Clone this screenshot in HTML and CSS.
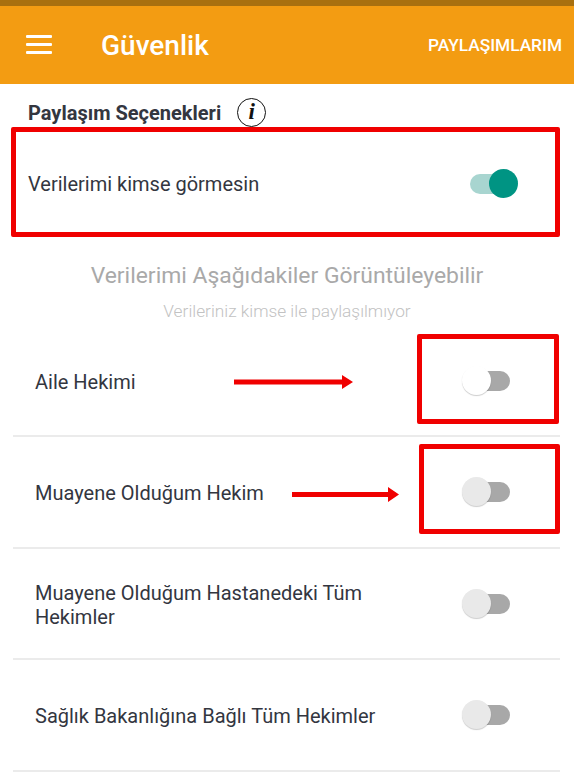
FILE: index.html
```html
<!DOCTYPE html>
<html lang="en">
<head>
    <meta charset="UTF-8">
    <meta name="viewport" content="width=device-width, initial-scale=1.0">
    <title>Güvenlik</title>
    <link rel="stylesheet" href="styles.css">
</head>
<body>
    <div class="status-strip"></div>

    <header class="app-bar">
        <div class="menu-icon"><span></span><span></span><span></span></div>
        <h1 class="app-title">Güvenlik</h1>
        <div class="app-action">PAYLAŞIMLARIM</div>
    </header>

    <div class="section-head">
        <h2>Paylaşım Seçenekleri</h2>
        <span class="info-icon">i</span>
    </div>

    <div class="hide-box">
        <span class="row-label">Verilerimi kimse görmesin</span>
        <div class="toggle on"><div class="track"></div><div class="knob"></div></div>
    </div>

    <div class="viewers-title">Verilerimi Aşağıdakiler Görüntüleyebilir</div>
    <div class="viewers-sub">Verileriniz kimse ile paylaşılmıyor</div>

    <div class="row">
        <span class="row-label">Aile Hekimi</span>
        <div class="toggle white"><div class="track"></div><div class="knob"></div></div>
        <svg class="arrow arrow-one" width="119" height="14" viewBox="0 0 119 14"><path d="M0 4.5h108V0l11 7-11 7V9.5H0z" fill="#f00000"/></svg>
        <div class="mark mark-one"></div>
    </div>
    <div class="row">
        <span class="row-label">Muayene Olduğum Hekim</span>
        <div class="toggle"><div class="track"></div><div class="knob"></div></div>
        <svg class="arrow arrow-two" width="107" height="15" viewBox="0 0 107 15"><path d="M0 5h96V0l11 7.5-11 7.5v-5H0z" fill="#f00000"/></svg>
        <div class="mark mark-two"></div>
    </div>
    <div class="row">
        <span class="row-label">Muayene Olduğum Hastanedeki Tüm Hekimler</span>
        <div class="toggle"><div class="track"></div><div class="knob"></div></div>
    </div>
    <div class="row">
        <span class="row-label">Sağlık Bakanlığına Bağlı Tüm Hekimler</span>
        <div class="toggle"><div class="track"></div><div class="knob"></div></div>
    </div>
</body>
</html>
```

FILE: styles.css
```css
body {
    margin: 0;
    height: 784px;
    overflow: hidden;
    background-color: #fff;
    color: #33363f;
    font-family: Roboto, sans-serif;
}
.status-strip {
    height: 6px;
    background-color: #a8700f;
}
.app-bar {
    display: flex;
    align-items: center;
    height: 78px;
    padding: 0 12px 0 26px;
    background-color: #f39c12;
    color: white;
}
.menu-icon {
    display: flex;
    flex-direction: column;
    gap: 5px;
    width: 26px;
    margin-top: -2px;
}
.menu-icon span {
    height: 3px;
    background-color: #fff;
    border-radius: 1px;
}
.app-title {
    flex: 1;
    margin: 0 0 0 49px;
    font-size: 28px;
    font-weight: 500;
}
.app-action {
    font-size: 17.3px;
    font-weight: 500;
}
.section-head {
    display: flex;
    align-items: center;
    gap: 16px;
    box-sizing: border-box;
    height: 43px;
    padding: 14px 0 0 28px;
}
.section-head h2 {
    margin: 0;
    font-size: 20px;
    font-weight: 700;
}
.info-icon {
    width: 29px;
    height: 29px;
    box-sizing: border-box;
    border: 1.5px solid #111;
    border-radius: 50%;
    color: #111;
    font-family: "Liberation Serif", serif;
    font-size: 23px;
    font-style: italic;
    font-weight: 700;
    line-height: 26px;
    text-align: center;
}
.hide-box {
    position: relative;
    display: flex;
    align-items: center;
    justify-content: space-between;
    box-sizing: border-box;
    height: 110px;
    margin: 0 14px 0 11px;
    padding: 3px 37px 0 12px;
    border: 5px solid #f00000;
    border-radius: 2px;
}
.row-label {
    font-size: 20px;
    line-height: 24px;
}
.viewers-title {
    margin-top: 26px;
    color: #a9a9a9;
    font-size: 22.9px;
    line-height: 26px;
    text-align: center;
}
.viewers-sub {
    margin: 11px 0 3.5px;
    color: #c2c2c2;
    font-size: 17.3px;
    font-weight: 300;
    line-height: 22px;
    text-align: center;
}
.row {
    position: relative;
    display: flex;
    align-items: center;
    justify-content: space-between;
    box-sizing: border-box;
    height: 111.5px;
    margin: 0 14px 0 13px;
    padding: 3px 50px 0 22px;
    border-bottom: 2px solid #ebebeb;
}
.row .row-label {
    max-width: 370px;
}
.row .toggle {
    margin-top: -2px;
}
.toggle {
    position: relative;
    flex: none;
    width: 48px;
    height: 30px;
}
.track {
    position: absolute;
    top: 5px;
    left: 8px;
    width: 40px;
    height: 20px;
    border-radius: 10px;
    background-color: #a8a8a8;
}
.knob {
    position: absolute;
    top: 0;
    left: 0;
    width: 29px;
    height: 29px;
    border-radius: 50%;
    background-color: #e9e9e9;
    box-shadow: 0 1px 1px rgba(0, 0, 0, 0.2);
}
.toggle.white .knob {
    background-color: #fff;
}
.toggle.on .track {
    left: 0;
    background-color: #a8d5d0;
}
.toggle.on .knob {
    left: 19px;
    background-color: #009483;
    box-shadow: none;
}
.arrow {
    position: absolute;
}
.arrow-one {
    left: 221px;
    top: 49px;
}
.arrow-two {
    left: 279px;
    top: 50px;
}
.mark {
    position: absolute;
    box-sizing: border-box;
    height: 90px;
    border: 5px solid #f00000;
    border-radius: 2px;
}
.mark-one {
    left: 404px;
    top: 8px;
    width: 142px;
}
.mark-two {
    left: 406px;
    top: 7px;
    width: 141px;
}
```
